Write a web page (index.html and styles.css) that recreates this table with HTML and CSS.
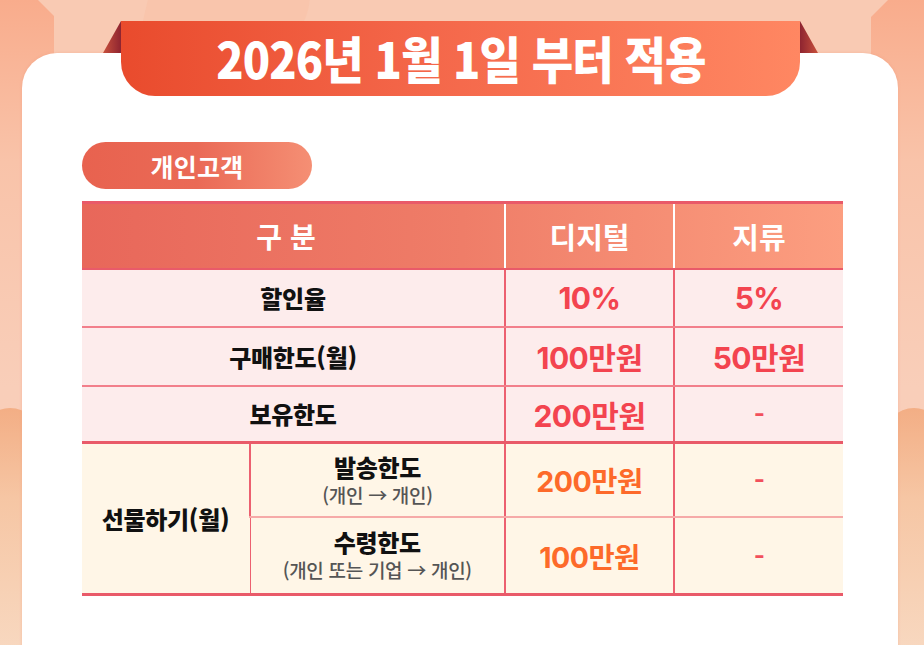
FILE: index.html
```html
<!DOCTYPE html>
<html lang="ko">
<head>
<meta charset="utf-8">
<title>2026년 1월 1일 부터 적용</title>
<link rel="stylesheet" href="styles.css">
</head>
<body>
<div class="page">
  <div class="deco deco-left"></div>
  <div class="deco deco-right"></div>
  <div class="deco blob-left"></div>
  <div class="deco blob-right"></div>
  <div class="deco wave"></div>

  <div class="banner"><span class="banner-text">2026년 1월 1일 부터 적용</span></div>

  <section class="card">
    <div class="pill">개인고객</div>
    <table class="limits">
      <colgroup>
        <col class="c1"><col class="c2"><col class="c3"><col class="c4">
      </colgroup>
      <thead>
        <tr class="head">
          <th colspan="2" class="th-main">구 분</th>
          <th>디지털</th>
          <th>지류</th>
        </tr>
      </thead>
      <tbody>
        <tr class="pink r1">
          <td colspan="2" class="label">할인율</td>
          <td class="val red">10%</td>
          <td class="val red">5%</td>
        </tr>
        <tr class="pink r2">
          <td colspan="2" class="label">구매한도(월)</td>
          <td class="val red">100만원</td>
          <td class="val red">50만원</td>
        </tr>
        <tr class="pink r3">
          <td colspan="2" class="label">보유한도</td>
          <td class="val red">200만원</td>
          <td class="val dash">-</td>
        </tr>
        <tr class="cream r4">
          <td rowspan="2" class="label gift">선물하기(월)</td>
          <td class="label sub-cell"><div>발송한도</div><div class="sub">(개인 → 개인)</div></td>
          <td class="val orange">200만원</td>
          <td class="val dash">-</td>
        </tr>
        <tr class="cream r5">
          <td class="label sub-cell"><div>수령한도</div><div class="sub">(개인 또는 기업 → 개인)</div></td>
          <td class="val orange">100만원</td>
          <td class="val dash">-</td>
        </tr>
      </tbody>
    </table>
  </section>
</div>
</body>
</html>
```

FILE: styles.css
```css
* { box-sizing: border-box; }

html, body {
  margin: 0;
  padding: 0;
}

body {
  background: #f9cab3;
  font-family: "Noto Sans CJK KR", "Noto Sans", sans-serif;
  overflow: hidden;
  width: 924px;
  height: 645px;
}

.page {
  position: relative;
  width: 924px;
  height: 645px;
  padding-top: 21px;
}

/* background decorations */
.deco {
  position: absolute;
  z-index: 0;
}

.deco-left {
  left: 0;
  top: 0;
  width: 54px;
  height: 645px;
  background: linear-gradient(180deg, #f9ac8c 0%, #f9c3a9 25%, #f9ceb9 60%, #f9cfba 100%);
  clip-path: polygon(0 0, 38px 0, 54px 16px, 54px 100%, 0 100%);
}

.deco-right {
  right: 0;
  top: 0;
  width: 53px;
  height: 645px;
  background: linear-gradient(180deg, #f9ac8c 0%, #f9c3a9 25%, #f9ceb9 60%, #f9cfba 100%);
  clip-path: polygon(17px 0, 100% 0, 100% 100%, 0 100%, 0 17px);
}

.blob-left,
.blob-right {
  top: 408px;
  width: 60px;
  height: 260px;
  border-radius: 40px 40px 0 0;
  background: linear-gradient(180deg, #f3ae85 0%, #f6c6a4 35%, #f8dac3 100%);
}
.blob-left { left: -20px; }
.blob-right { right: -20px; }

.wave {
  left: 135px;
  top: -20px;
  width: 175px;
  height: 75px;
  background: #f8c1a7;
  border-radius: 0 0 60px 40px;
  clip-path: polygon(10% 0, 100% 0, 100% 100%, 0 100%);
  opacity: 0.6;
}

/* banner */
.banner {
  position: relative;
  z-index: 3;
  margin-left: 121px;
  width: 679px;
  height: 75px;
  border-radius: 0 0 34px 34px;
  background: linear-gradient(90deg, #e94b2d 0%, #f4674a 45%, #ff8762 100%);
  display: flex;
  align-items: center;
  justify-content: center;
}

.banner::before,
.banner::after {
  content: "";
  position: absolute;
  top: 0;
  width: 18px;
  height: 32px;
}
.banner::before {
  left: -18px;
  background: linear-gradient(90deg, #c8503c, #8e2430);
  clip-path: polygon(100% 0, 100% 100%, 0 100%);
}
.banner::after {
  right: -18px;
  background: linear-gradient(90deg, #8e2430, #c8503c);
  clip-path: polygon(0 0, 100% 100%, 0 100%);
}

.banner-text {
  color: #ffffff;
  font-size: 50px;
  font-weight: 900;
  letter-spacing: -1px;
  line-height: 1;
  margin-top: -4px;
  display: inline-block;
  transform: scaleX(0.9);
  white-space: nowrap;
}

/* card */
.card {
  position: relative;
  z-index: 2;
  margin: -43px 26px 0 22px;
  height: 600px;
  background: #ffffff;
  border-radius: 35px 35px 0 0;
  box-shadow: 0 0 3px rgba(240, 150, 120, 0.45);
  padding: 89px 55px 0 60px;
}

.pill {
  width: 230px;
  height: 47px;
  border-radius: 24px;
  background: linear-gradient(90deg, #e8624f 0%, #ea6a56 50%, #f58f74 100%);
  color: #ffffff;
  font-size: 25px;
  font-weight: 700;
  letter-spacing: 0.3px;
  display: flex;
  align-items: center;
  justify-content: center;
}

/* table */
.limits {
  margin-top: 12px;
  width: 761px;
  border-collapse: collapse;
  table-layout: fixed;
}

.c1 { width: 168px; }
.c2 { width: 255px; }
.c3 { width: 169px; }
.c4 { width: 169px; }

.limits th,
.limits td {
  padding: 0;
  text-align: center;
  vertical-align: middle;
}

.head th {
  height: 66px;
  color: #ffffff;
  font-size: 29px;
  font-weight: 700;
  border-top: 3px solid #e95a69;
  border-bottom: 2px solid #e95a69;
  border-left: 2px solid #ffffff;
}
.head th:first-child { border-left: none; }
.head th.th-main {
  font-size: 28px;
  padding-right: 14px;
}
.head {
  background: linear-gradient(90deg, #e8675a 0%, #ef7d68 50%, #fc9e80 100%);
}

.pink td { background: #fdecec; }
.cream td { background: #fff6e7; }

.limits tbody td {
  border-left: 2px solid #ec6070;
}
.limits tbody td:first-child { border-left: none; }
.limits tbody tr.r5 td:first-child { border-left: 1px solid #ec6070; }

.r1 td { height: 58px; border-bottom: 2px solid #f27f8b; }
.r2 td { height: 59px; border-bottom: 2px solid #f27f8b; }
.r3 td { height: 57px; border-bottom: 3px solid #e95a69; }
.r4 td { height: 74px; border-bottom: 2px solid #f6aaa8; }
.r4 td.gift { border-bottom: 3px solid #e95a69; border-right: 1px solid #ec6070; }
.r5 td { height: 78px; border-bottom: 3px solid #e95a69; }

.label {
  color: #111111;
  font-size: 24px;
  font-weight: 900;
  letter-spacing: -0.3px;
}

.sub-cell { line-height: 1.2; }

.sub {
  color: #555555;
  font-size: 19px;
  font-weight: 500;
  margin-top: 2px;
  letter-spacing: -0.3px;
}

.val {
  font-family: "Inter", "Noto Sans CJK KR", sans-serif;
  font-weight: 700;
  font-size: 30px;
  letter-spacing: -0.5px;
}
.red { color: #f3444f; }
.orange { color: #fd6a2a; font-size: 28.5px; }
.dash {
  color: #f2505c;
  font-size: 24px;
}
```
